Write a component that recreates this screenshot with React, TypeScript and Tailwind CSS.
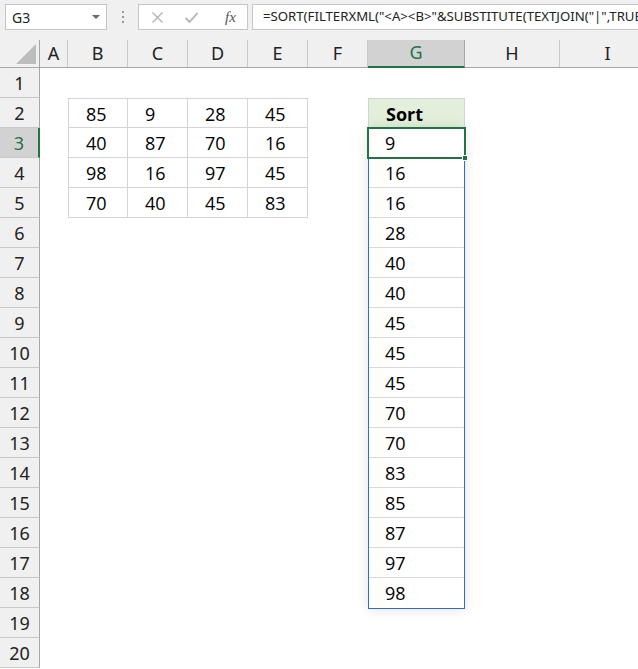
import React from 'react';

const cols = [
    { l: 'A', w: 28 },
    { l: 'B', w: 60 },
    { l: 'C', w: 60 },
    { l: 'D', w: 60 },
    { l: 'E', w: 60 },
    { l: 'F', w: 60 },
    { l: 'G', w: 97 },
    { l: 'H', w: 95 },
    { l: 'I', w: 96 },
];

const table = [
    [85, 9, 28, 45],
    [40, 87, 70, 16],
    [98, 16, 97, 45],
    [70, 40, 45, 83],
];

const sorted = [9, 16, 16, 28, 40, 40, 45, 45, 45, 70, 70, 83, 85, 87, 97, 98];

const cellFont = { fontFamily: '"Open Sans", "Liberation Sans", sans-serif' };
const uiFont = { fontFamily: '"Noto Sans", "Open Sans", sans-serif' };

function cellContent(row: number, col: number) {
    // row is 1-based, col index into cols
    if (row >= 2 && row <= 5 && col >= 1 && col <= 4) {
        return { text: String(table[row - 2][col - 1]), cls: 'border-r border-b border-[#d4d4d4]' + (col === 1 ? ' border-l' : '') + (row === 2 ? ' border-t' : '') };
    }
    if (col === 6 && row === 2) {
        return { text: 'Sort', cls: 'bg-[#e2efda] font-bold border border-[#d4d4d4]' };
    }
    if (col === 6 && row >= 3 && row <= 18) {
        return { text: String(sorted[row - 3]), cls: row < 18 ? 'border-b border-[#d9d9d9]' : '' };
    }
    return { text: '', cls: '' };
}

export default function App() {
    const rows = Array.from({ length: 20 }, (_, i) => i + 1);

    return (
        <div className="w-[638px] h-[669px] overflow-hidden bg-white select-none" style={uiFont}>
            {/* formula bar */}
            <div className="h-[40px] bg-[#f0f0f0] flex items-start pt-[4px] pl-[5px] gap-0">
                <div className="w-[102px] h-[26px] bg-white border border-[#c6c6c6] flex items-center justify-between pl-[6px] pr-[6px]">
                    <span className="text-[14px] text-[#222]">G3</span>
                    <svg width="8" height="5" viewBox="0 0 8 5"><path d="M0 0 L8 0 L4 4 Z" fill="#666" /></svg>
                </div>
                <div className="w-[31px] h-[26px] flex flex-col items-center justify-center gap-[3px]">
                    <span className="w-[2px] h-[2px] bg-[#9a9a9a]" />
                    <span className="w-[2px] h-[2px] bg-[#9a9a9a]" />
                    <span className="w-[2px] h-[2px] bg-[#9a9a9a]" />
                </div>
                <div className="w-[110px] h-[26px] bg-white border border-[#c6c6c6] flex items-center pl-[12px] gap-[20px]">
                    <svg width="13" height="13" viewBox="0 0 13 13"><path d="M1.5 1.5 L11.5 11.5 M11.5 1.5 L1.5 11.5" stroke="#b3b3b3" strokeWidth="1.4" /></svg>
                    <svg width="15" height="13" viewBox="0 0 15 13"><path d="M1.5 7 L5.5 11 L13.5 2" stroke="#b3b3b3" strokeWidth="1.8" fill="none" /></svg>
                    <span className="ml-[6px] text-[15px] italic text-[#555] leading-none" style={{ fontFamily: '"Liberation Serif", serif' }}>fx</span>
                </div>
                <div className="ml-[4px] flex-1 min-w-0 h-[26px] bg-white border border-r-0 border-[#c6c6c6] flex items-center pl-[10px] overflow-hidden whitespace-nowrap">
                    <span className="text-[13.2px] text-[#222]">=SORT(FILTERXML("&lt;A&gt;&lt;B&gt;"&amp;SUBSTITUTE(TEXTJOIN("|",TRUE</span>
                </div>
            </div>

            {/* sheet */}
            <div className="relative">
                {/* column headers */}
                <div className="flex h-[28px] bg-[#f0f0f0] border-b border-[#a6a6a6]">
                    <div className="w-[40px] shrink-0 border-r border-[#a6a6a6] relative flex items-end justify-end pr-[3px] pb-[3px]">
                        <svg width="20" height="20" viewBox="0 0 20 20"><path d="M20 0 L20 20 L0 20 Z" fill="#bdbdbd" /></svg>
                    </div>
                    {cols.map(c => {
                        const sel = c.l === 'G';
                        return (
                            <div
                                key={c.l}
                                style={{ width: c.w }}
                                className={
                                    'shrink-0 flex items-end justify-center pb-[1px] text-[18px] leading-[26px] ' +
                                    (sel
                                        ? 'bg-[#d2d2d2] text-[#217346] border-b-2 border-[#217346] -mb-[1px] border-r border-r-[#a6a6a6]'
                                        : 'text-[#222] border-r border-[#c8c8c8]')
                                }
                            >
                                {c.l}
                            </div>
                        );
                    })}
                </div>

                {/* rows */}
                {rows.map(r => (
                    <div key={r} className="flex h-[30px]">
                        <div
                            className={
                                'w-[40px] shrink-0 flex items-center justify-center text-[18px] leading-[30px] border-b ' +
                                (r === 3
                                    ? 'bg-[#d2d2d2] text-[#217346] border-r-2 border-r-[#217346] border-b-[#c8c8c8]'
                                    : 'bg-[#f0f0f0] text-[#222] border-r border-r-[#a6a6a6] border-b-[#c8c8c8]')
                            }
                        >
                            {r}
                        </div>
                        {cols.map((c, ci) => {
                            const cell = cellContent(r, ci);
                            return (
                                <div
                                    key={c.l}
                                    style={{ width: c.w, ...cellFont }}
                                    className={'shrink-0 h-[30px] pl-[17px] text-[18px] leading-[30px] text-black whitespace-nowrap ' + cell.cls}
                                >
                                    {cell.text}
                                </div>
                            );
                        })}
                    </div>
                ))}

                {/* spill range border */}
                <div className="absolute left-[368px] top-[88px] w-[97px] h-[481px] border border-[#2f6bd0] shadow-[0_0_12px_rgba(0,0,0,0.12)] pointer-events-none" />
                {/* active cell */}
                <div className="absolute left-[367px] top-[87px] w-[99px] h-[32px] border-2 border-[#217346] pointer-events-none">
                    <div className="absolute -right-[4px] -bottom-[4px] w-[6px] h-[6px] bg-[#217346] border border-white" />
                </div>
            </div>
        </div>
    );
}
